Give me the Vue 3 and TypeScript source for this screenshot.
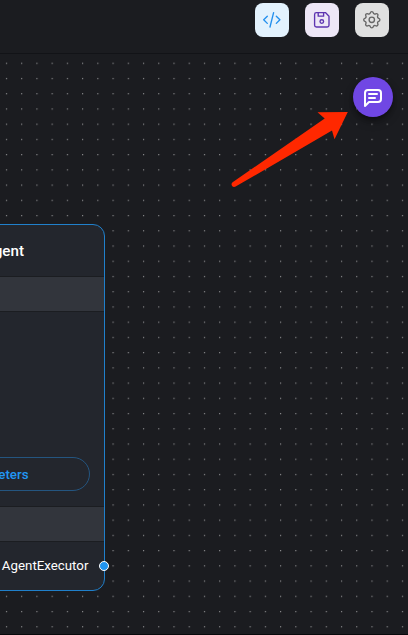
<script setup lang="ts">
const nodeTitle = 'LLM Agent'
const paramsLabel = 'Additional Parameters'
const outputLabel = 'AgentExecutor'
</script>

<template>
  <main class="app">
    <header class="toolbar">
      <button class="tool code" aria-label="Code">
        <svg viewBox="0 0 24 24"><path d="M7 8l-4 4 4 4M17 8l4 4-4 4M14 4l-4 16" /></svg>
      </button>
      <button class="tool save" aria-label="Save">
        <svg viewBox="0 0 24 24">
          <path d="M6 4h10l4 4v10a2 2 0 0 1-2 2H6a2 2 0 0 1-2-2V6a2 2 0 0 1 2-2M14 4v4H8V4" />
          <circle cx="12" cy="14" r="2" />
        </svg>
      </button>
      <button class="tool settings" aria-label="Settings">
        <svg viewBox="0 0 24 24">
          <path d="M10.325 4.317c.426-1.756 2.924-1.756 3.35 0a1.724 1.724 0 0 0 2.573 1.066c1.543-.94 3.31.826 2.37 2.37a1.724 1.724 0 0 0 1.065 2.572c1.756.426 1.756 2.924 0 3.35a1.724 1.724 0 0 0-1.066 2.573c.94 1.543-.826 3.31-2.37 2.37a1.724 1.724 0 0 0-2.572 1.065c-.426 1.756-2.924 1.756-3.35 0a1.724 1.724 0 0 0-2.573-1.066c-1.543.94-3.31-.826-2.37-2.37a1.724 1.724 0 0 0-1.065-2.572c-1.756-.426-1.756-2.924 0-3.35a1.724 1.724 0 0 0 1.066-2.573c-.94-1.543.826-3.31 2.37-2.37 1 .608 2.296.07 2.572-1.065z" />
          <circle cx="12" cy="12" r="3" />
        </svg>
      </button>
    </header>

    <section class="canvas">
      <svg class="grid">
        <defs>
          <pattern id="dots" x="5.9" y="8.67" width="15.23" height="15.23" patternUnits="userSpaceOnUse">
            <circle cx="0.6" cy="0.6" r="0.6" fill="#a5a5a7" />
          </pattern>
        </defs>
        <rect width="100%" height="100%" fill="url(#dots)" />
      </svg>

      <article class="node">
        <h2 class="title">{{ nodeTitle }}</h2>
        <div class="band"></div>
        <div class="inputs">
          <button class="params">{{ paramsLabel }}</button>
        </div>
        <div class="band lower"></div>
        <div class="output">{{ outputLabel }}<i class="handle"></i></div>
      </article>

      <button class="chat" aria-label="Chat">
        <svg viewBox="0 0 24 24">
          <path d="M4 21V8a3 3 0 0 1 3-3h10a3 3 0 0 1 3 3v6a3 3 0 0 1-3 3H8l-4 4M8 9h8M8 13h6" />
        </svg>
      </button>

      <svg class="arrow" viewBox="0 0 120 80">
        <path d="M2.6 72.2 L94.7 8.4 L87.5 2.2 L117.8 2 L104.5 29.3 L102 20.5 L5.6 76.6 Q3.5 77.6 2.1 76 Q0.7 73.7 2.6 72.2 Z" />
      </svg>
    </section>
  </main>
</template>

<style>
body {
  margin: 0;
  background: #1a1b1f;
}
</style>

<style scoped>
.app {
  display: flex;
  flex-direction: column;
  height: 635px;
  overflow: hidden;
  box-sizing: border-box;
  border-bottom: 1px solid #08090c;
  background: #1b1c20;
  font-family: Roboto, sans-serif;
}
.toolbar {
  display: flex;
  flex: none;
  justify-content: flex-end;
  align-items: flex-start;
  gap: 16px;
  height: 54px;
  box-sizing: border-box;
  padding: 3px 19px 0 0;
  border-bottom: 1px solid #121317;
}
button {
  border: 0;
  padding: 0;
  font: inherit;
}
.tool {
  display: flex;
  align-items: center;
  justify-content: center;
  width: 34px;
  height: 34px;
  border-radius: 8px;
}
svg path,
svg circle {
  stroke-linecap: round;
  stroke-linejoin: round;
}
.tool svg {
  width: 21.6px;
  height: 21.6px;
  fill: none;
  stroke: currentColor;
  stroke-width: 1.5;
}
.code {
  background: #e3f2fd;
  color: #2390ee;
}
.save {
  background: #ede7f6;
  color: #5e35b1;
}
.settings {
  background: #e0e0e0;
  color: #666;
}
.canvas {
  position: relative;
  flex: 1;
}
.grid {
  position: absolute;
  inset: 0;
  width: 100%;
  height: 100%;
}
.node {
  position: absolute;
  left: -150px;
  top: 170px;
  display: flex;
  flex-direction: column;
  width: 255px;
  height: 367px;
  box-sizing: border-box;
  border: 1px solid #2080cb;
  border-radius: 12px;
  background: #23262d;
  color: #fff;
}
.title {
  height: 51px;
  margin: 0;
  padding-right: 80px;
  text-align: right;
  font-size: 15.2px;
  line-height: 52px;
  font-weight: 500;
}
.band {
  flex: none;
  height: 36px;
  box-sizing: border-box;
  background: #32353c;
  border: solid #1b1d21;
  border-width: 1px 0;
}
.inputs {
  display: flex;
  flex: 1;
  flex-direction: column;
  justify-content: flex-end;
  padding: 0 14.5px 15px;
}
.params {
  height: 34px;
  box-sizing: border-box;
  padding: 1px 60px 0 0;
  border: 1px solid #245580;
  border-radius: 17px;
  background: transparent;
  color: #2196f3;
  text-align: right;
  font-size: 13.3px;
  font-weight: 500;
}
.output {
  position: relative;
  height: 48px;
  padding-right: 15.6px;
  text-align: right;
  font-size: 13.3px;
  line-height: 48px;
}
.handle {
  position: absolute;
  right: -5px;
  top: 19px;
  width: 10px;
  height: 10px;
  box-sizing: border-box;
  border: 1px solid #fff;
  border-radius: 50%;
  background: #2196f3;
}
.chat {
  position: absolute;
  right: 15px;
  top: 23px;
  display: flex;
  align-items: center;
  justify-content: center;
  width: 40px;
  height: 40px;
  border-radius: 50%;
  background: #7047e4;
  box-shadow: 0 3px 5px -1px #0006, 0 5px 10px #0004;
}
.chat svg {
  width: 24px;
  height: 24px;
  fill: none;
  stroke: #fff;
  stroke-width: 2;
}
.arrow {
  position: absolute;
  left: 230px;
  top: 56px;
  width: 120px;
  height: 80px;
  fill: #ff2800;
}
</style>
